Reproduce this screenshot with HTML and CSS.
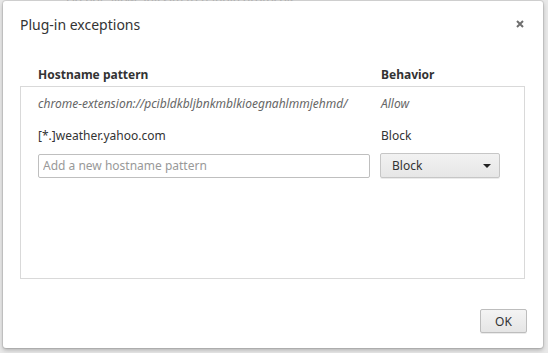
FILE: index.html
```html
<!DOCTYPE html>
<html lang="en">
<head>
  <meta charset="UTF-8" />
  <title>Plug-in exceptions</title>
  <link rel="stylesheet" href="styles.css">
</head>
<body>
  <div class="page">
    <p class="page-line">Do not allow any site to handle protocols</p>
  </div>

  <div class="overlay">
    <div class="dialog">
      <div class="dialog-head">
        <h1>Plug-in exceptions</h1>
        <svg class="close" width="8" height="8" viewBox="0 0 8 8">
          <path d="M1 1L7 7M7 1L1 7" stroke="#6f6f6f" stroke-width="2" />
        </svg>
      </div>

      <div class="dialog-body">
        <div class="cols">
          <span class="col-pattern">Hostname pattern</span>
          <span class="col-behavior">Behavior</span>
        </div>
        <div class="list">
          <div class="row extension">
            <span class="col-pattern">chrome-extension://pcibldkbljbnkmblkioegnahlmmjehmd/</span>
            <span class="col-behavior">Allow</span>
          </div>
          <div class="row">
            <span class="col-pattern">[*.]weather.yahoo.com</span>
            <span class="col-behavior">Block</span>
          </div>
          <div class="row">
            <div class="col-pattern">
              <input type="text" class="new-host" placeholder="Add a new hostname pattern" />
            </div>
            <div class="select">
              <span>Block</span>
              <span class="arrow"></span>
            </div>
          </div>
        </div>
      </div>

      <div class="dialog-foot">
        <button class="ok">OK</button>
      </div>
    </div>
  </div>
</body>
</html>
```

FILE: styles.css
```css
body {
  margin: 0;
  width: 548px;
  height: 353px;
  overflow: hidden;
  background: #e8e8e8;
  font-family: "Noto Sans", "Open Sans", sans-serif;
  font-size: 12px;
  color: #333;
}

.page {
  padding-left: 66px;
}

.page-line {
  margin: -6px 0 0;
  font-size: 12px;
  line-height: 14px;
  color: #c4c4c4;
}

.overlay {
  position: absolute;
  left: 3px;
  top: 1px;
}

.dialog {
  width: 540px;
  height: 347px;
  background: #fff;
  border-radius: 3px;
  box-shadow: 0 2px 4px rgba(0, 0, 0, 0.25), 0 0 0 1px rgba(0, 0, 0, 0.08);
  display: flex;
  flex-direction: column;
}

.dialog-head {
  display: flex;
  justify-content: space-between;
  align-items: center;
  padding: 12px 19px 0 17px;
  height: 22px;
}

h1 {
  margin: 0;
  font-size: 14px;
  font-weight: normal;
  color: #333;
}

.dialog-body {
  margin: 0 18px 0 17px;
  padding-top: 31px;
}

.cols {
  display: flex;
  font-weight: bold;
  color: #333;
  height: 20px;
  padding-left: 18px;
}

.col-pattern {
  width: 343px;
  flex: none;
}

.list {
  border: 1px solid #d9d9d9;
  height: 191px;
  padding-left: 17px;
}

.row {
  display: flex;
  align-items: center;
  height: 32px;
}

.row:last-child {
  height: 29px;
}

.extension {
  font-style: italic;
  color: #666;
}

.new-host {
  box-sizing: border-box;
  width: 332px;
  height: 24px;
  margin: 0;
  padding: 0 4px;
  border: 1px solid #bfbfbf;
  border-radius: 2px;
  font-family: inherit;
  font-size: 12px;
  color: #333;
}

.new-host::placeholder {
  color: #999;
}

.select {
  box-sizing: border-box;
  width: 120px;
  height: 25px;
  margin-left: -1px;
  padding: 0 8px 0 11px;
  display: flex;
  justify-content: space-between;
  align-items: center;
  border: 1px solid #c6c6c6;
  border-radius: 2px;
  background: linear-gradient(to bottom, #f2f2f2, #e6e6e6);
  box-shadow: 0 1px 0 rgba(0, 0, 0, 0.08);
  color: #333;
}

.arrow {
  width: 0;
  height: 0;
  border-left: 4px solid transparent;
  border-right: 4px solid transparent;
  border-top: 4px solid #222;
}

.dialog-foot {
  display: flex;
  justify-content: flex-end;
  padding: 30px 16px 0 0;
}

.ok {
  box-sizing: border-box;
  width: 47px;
  height: 24px;
  border: 1px solid #bdbdbd;
  border-radius: 2px;
  background: linear-gradient(to bottom, #f4f4f4, #e5e5e5);
  box-shadow: 0 1px 0 rgba(0, 0, 0, 0.08);
  font-family: inherit;
  font-size: 12px;
  color: #333;
}
```
